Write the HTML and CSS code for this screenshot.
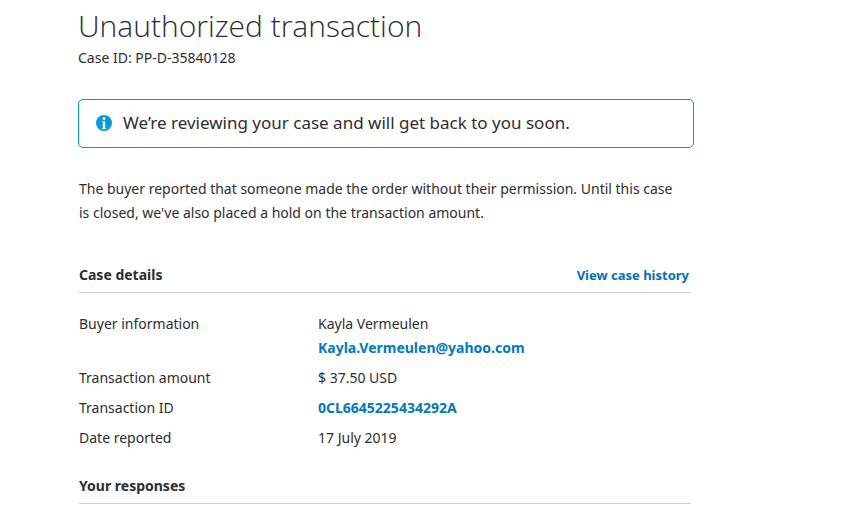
FILE: index.html
```html
<!DOCTYPE html>
<html lang="en">
<head>
<meta charset="utf-8">
<meta name="viewport" content="width=device-width, initial-scale=1">
<title>Unauthorized transaction</title>
<link rel="stylesheet" href="styles.css">
</head>
<body>
<main class="page">
  <header class="case-header">
    <h1 class="title">Unauthorized transaction</h1>
    <p class="case-id">Case ID: PP-D-35840128</p>
  </header>
  <div class="notice" role="status">
    <svg class="notice-icon" viewBox="0 0 16 16" aria-hidden="true">
      <circle cx="8" cy="8" r="8" fill="#009cde"/>
      <circle cx="8" cy="3.500" r="1.400" fill="#fff"/>
      <path d="M6 6h3.200v7H10v1H6v-1h.8V7H6z" fill="#fff"/>
    </svg>
    <p class="notice-text">We’re reviewing your case and will get back to you soon.</p>
  </div>
  <p class="summary">The buyer reported that someone made the order without their permission. Until this case is closed, we've also placed a hold on the transaction amount.</p>
  <section class="section">
    <div class="section-head">
      <h2 class="section-title">Case details</h2>
      <a class="link history" href="#history">View case history</a>
    </div>
    <dl class="details">
      <dt>Buyer information</dt>
      <dd>Kayla Vermeulen<a class="link email" href="mailto:Kayla.Vermeulen@yahoo.com">Kayla.Vermeulen@yahoo.com</a></dd>
      <dt>Transaction amount</dt>
      <dd>$ 37.50 USD</dd>
      <dt>Transaction ID</dt>
      <dd><a class="link" href="#transaction">0CL6645225434292A</a></dd>
      <dt>Date reported</dt>
      <dd>17 July 2019</dd>
    </dl>
  </section>
  <section class="section responses">
    <div class="section-head">
      <h2 class="section-title">Your responses</h2>
    </div>
  </section>
</main>
</body>
</html>
```
FILE: styles.css
```css
* { box-sizing: border-box; }
body {
  margin: 0;
  background: #fff;
  color: #2c2e2f;
  font: 14px/24px "Noto Sans", "Open Sans", sans-serif;
}
h1, h2, p, dl, dd { margin: 0; }
.page {
  max-width: 694px;
  padding: 6px 0 0 78px;
}
.title {
  font-family: "Open Sans", "Noto Sans", sans-serif;
  font-weight: 300;
  font-size: 30px;
  line-height: 40px;
}
.notice {
  display: flex;
  align-items: center;
  gap: 11px;
  margin-top: 29px;
  padding: 10px 17px 12px;
  border: 1px solid #009cde;
  border-radius: 5px;
}
.notice-icon { width: 16px; height: 16px; flex: none; }
.notice-text { font-size: 17px; line-height: 25px; }
.summary { margin: 29px 8px 0 1px; }
.section { margin: 38px 3px 0 1px; }
.section-head {
  display: flex;
  justify-content: space-between;
  padding: 0 2px 5px 0;
  border-bottom: 1px solid #cbd2d6;
}
.section-title { font-size: 14px; line-height: 24px; font-weight: 700; }
.link { color: #0079c1; font-weight: 700; text-decoration: none; }
.link:hover { text-decoration: underline; }
.history { color: #0070ba; font-size: 13px; }
.details {
  display: grid;
  grid-template-columns: 239px 1fr;
  row-gap: 6px;
  margin-top: 19px;
}
.email { display: block; }
.responses { margin-top: 24px; }
```
